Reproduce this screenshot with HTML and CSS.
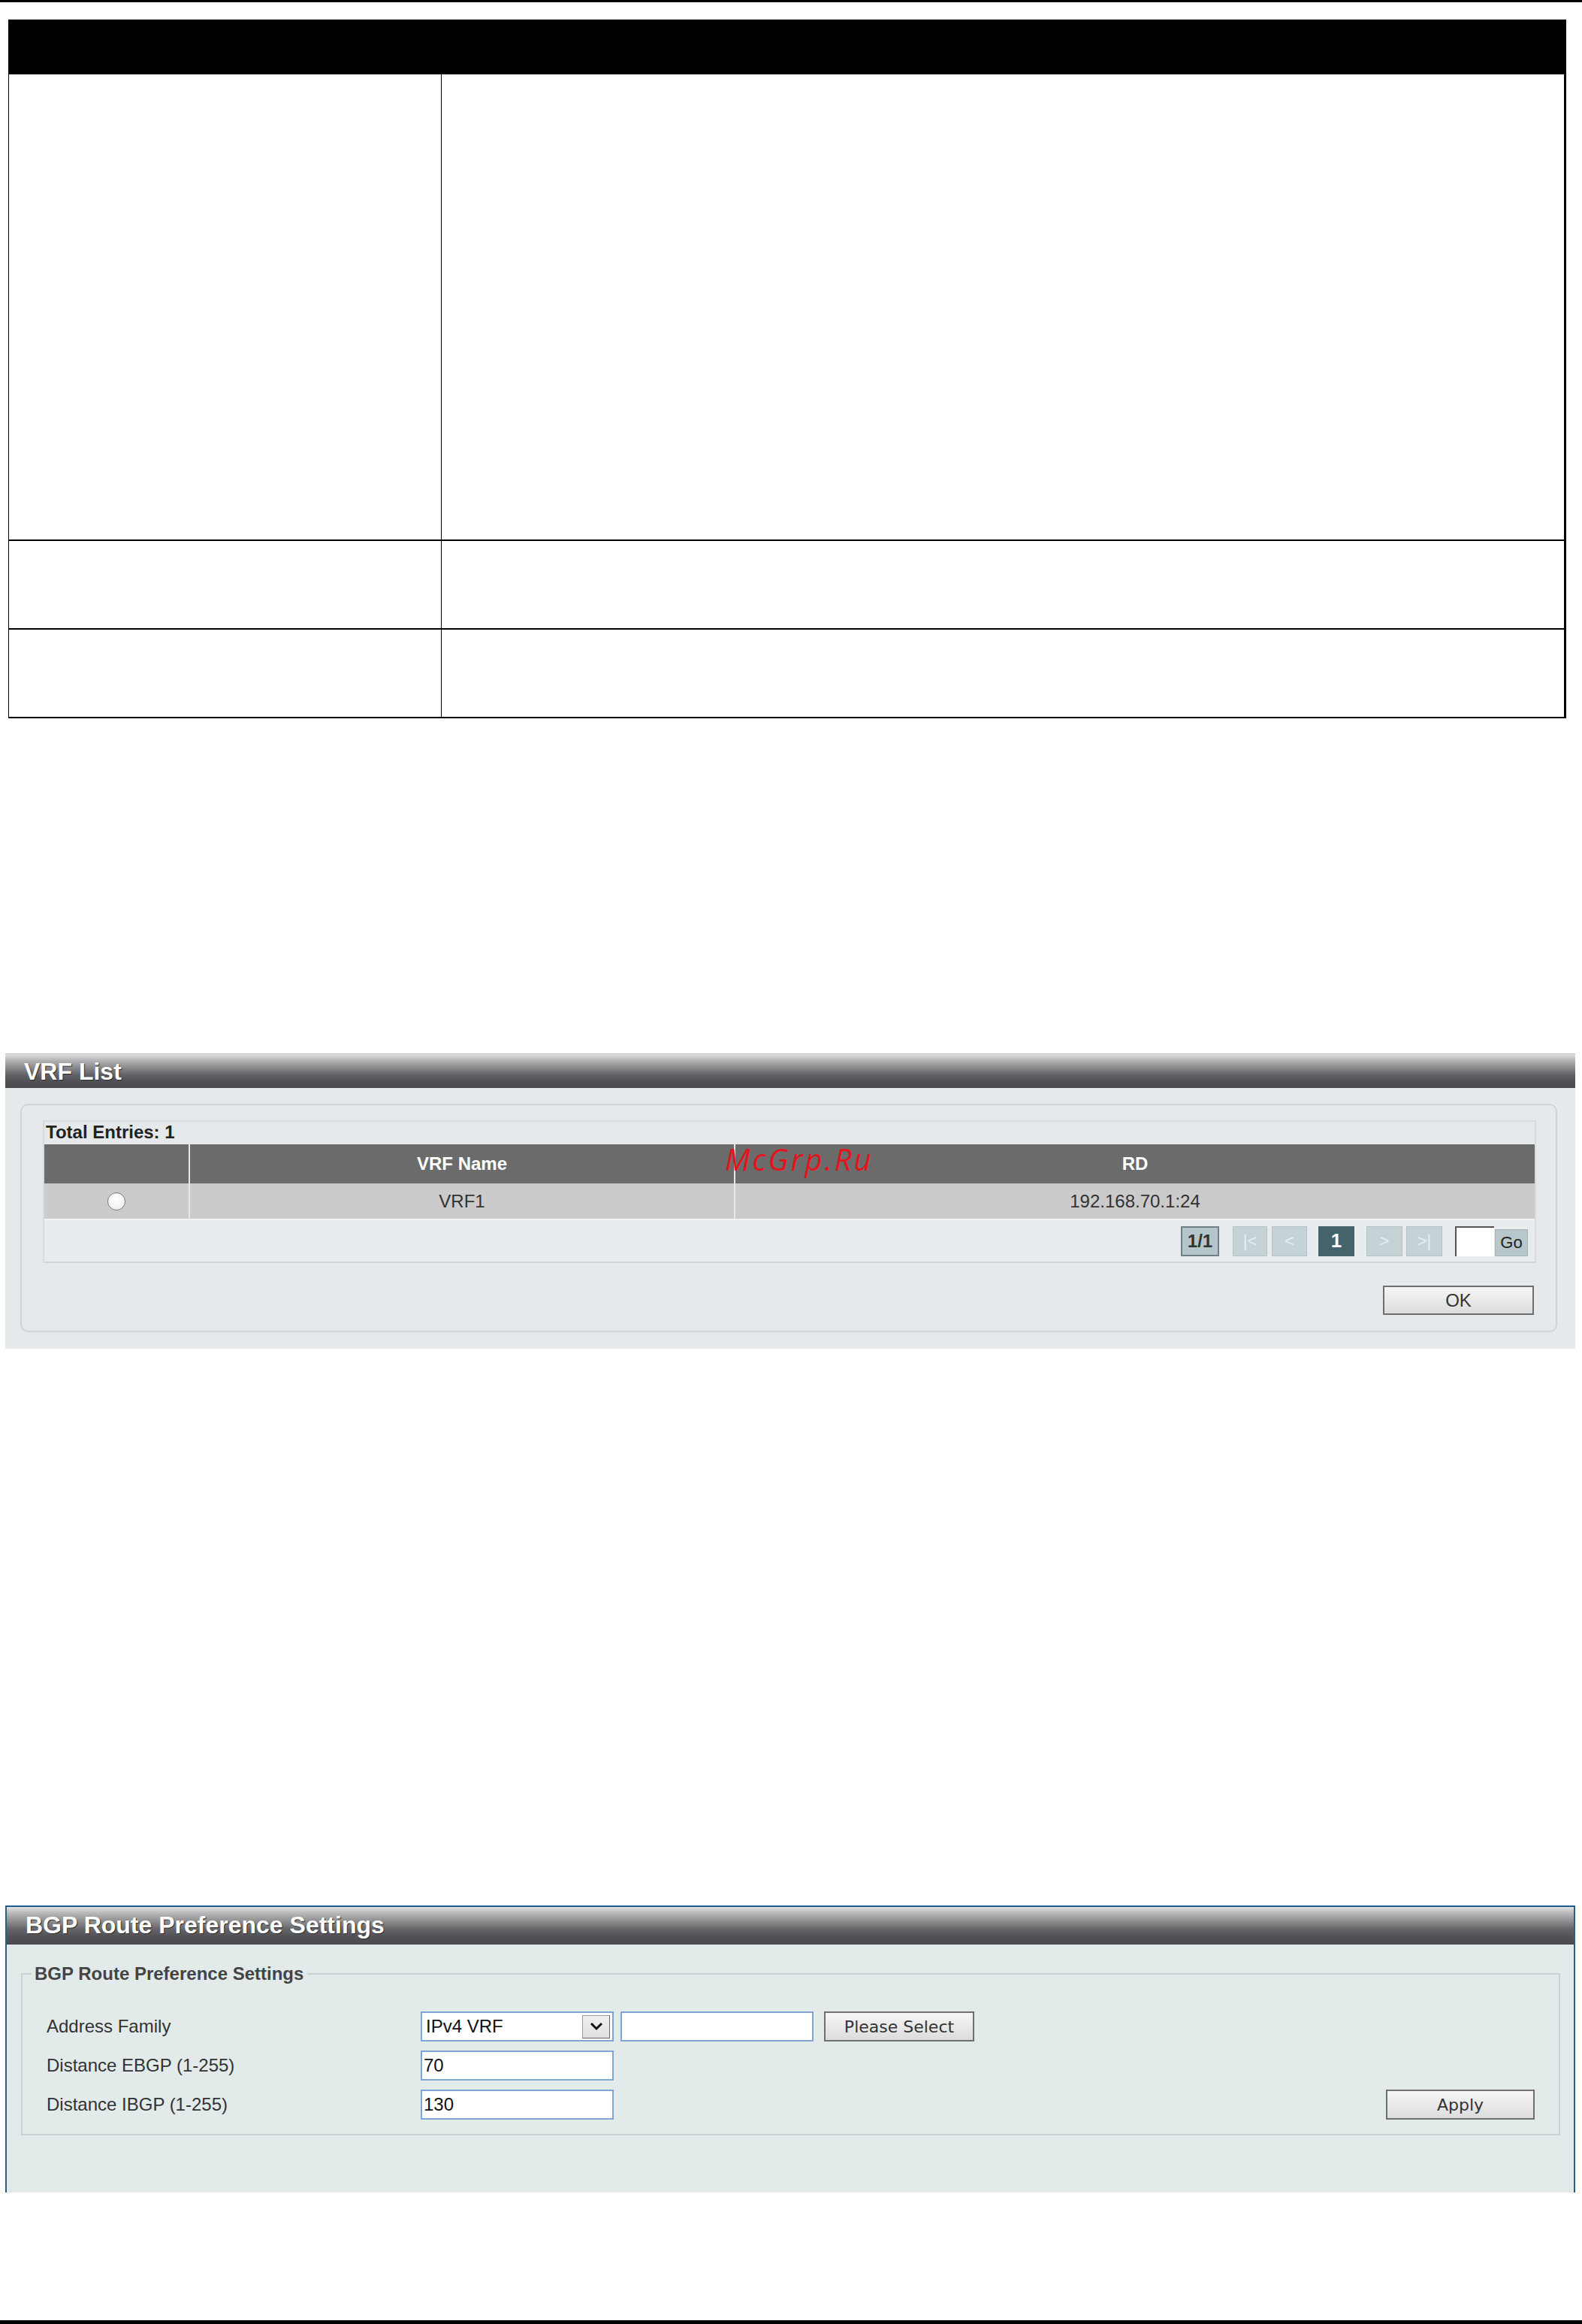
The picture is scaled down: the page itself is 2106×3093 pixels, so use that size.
FILE: index.html
```html
<!DOCTYPE html>
<html lang="en">
<head>
<meta charset="utf-8">
<title>VRF List / BGP Route Preference Settings</title>
<link rel="stylesheet" href="styles.css">
</head>
<body>
<div class="page">
  <div class="top-rule"></div>

  <div class="doc-table">
    <div class="doc-head"></div>
    <div class="doc-row row-tall"><div class="doc-cell"></div><div class="doc-cell"></div></div>
    <div class="doc-row row-short"><div class="doc-cell"></div><div class="doc-cell"></div></div>
    <div class="doc-row row-short"><div class="doc-cell"></div><div class="doc-cell"></div></div>
  </div>

  <section class="panel vrf-panel">
    <div class="panel-title">VRF List</div>
    <div class="panel-body vrf-body">
      <div class="list-box">
        <div class="entries">
          <div class="entries-caption">Total Entries: 1</div>
          <div class="grid-head">
            <div class="gcell"></div>
            <div class="gcell">VRF Name</div>
            <div class="gcell">RD</div>
          </div>
          <div class="grid-row">
            <div class="gcell"><span class="radio"></span></div>
            <div class="gcell">VRF1</div>
            <div class="gcell">192.168.70.1:24</div>
          </div>
          <div class="pager-row">
            <span class="pg pg-count">1/1</span>
            <span class="pg pg-dis pg-first">|&lt;</span>
            <span class="pg pg-dis pg-prev">&lt;</span>
            <span class="pg pg-cur">1</span>
            <span class="pg pg-dis pg-next">&gt;</span>
            <span class="pg pg-dis pg-last">&gt;|</span>
            <span class="pg-input"></span>
            <span class="pg-go">Go</span>
          </div>
        </div>
        <div class="ok-row"><span class="btn btn-ok">OK</span></div>
      </div>
    </div>
    <div class="watermark">McGrp.Ru</div>
  </section>

  <section class="panel bgp-panel">
    <div class="panel-title">BGP Route Preference Settings</div>
    <div class="panel-body bgp-body">
      <fieldset class="bgp-set">
        <legend>BGP Route Preference Settings</legend>
        <div class="form-row">
          <span class="label">Address Family</span>
          <span class="select"><span class="select-text">IPv4 VRF</span><span class="select-arrow"><svg width="20" height="14" viewBox="0 0 20 14"><path d="M3 3 L10 10 L17 3" fill="none" stroke="#111" stroke-width="3"/></svg></span></span>
          <span class="input input-vrf"></span>
          <span class="btn btn-select">Please Select</span>
        </div>
        <div class="form-row">
          <span class="label">Distance EBGP (1-255)</span>
          <span class="input input-num">70</span>
        </div>
        <div class="form-row">
          <span class="label">Distance IBGP (1-255)</span>
          <span class="input input-num">130</span>
          <span class="btn btn-apply">Apply</span>
        </div>
      </fieldset>
    </div>
  </section>

  <div class="bottom-rule"></div>
</div>
</body>
</html>
```
FILE: styles.css
```css
html, body {
  margin: 0;
  padding: 0;
  background: #ffffff;
}
body {
  font-family: "Liberation Sans", Arial, sans-serif;
  color: #333;
}
.page {
  width: 2106px;
  height: 3093px;
  position: relative;
  overflow: hidden;
}
.top-rule {
  height: 3px;
  background: #000;
}
.bottom-rule {
  height: 5px;
  background: #000;
  margin-top: 170px;
}

/* document table */
.doc-table {
  margin: 23px 0 0 11px;
  width: 2074px;
  box-sizing: border-box;
  border-left: 1px solid #000;
  border-right: 3px solid #000;
}
.doc-head {
  height: 73px;
  background: #000;
}
.doc-row {
  display: grid;
  grid-template-columns: 576px 1fr;
  border-bottom: 2px solid #000;
}
.row-tall { height: 619px; }
.row-short { height: 116px; }
.doc-cell:first-child {
  border-right: 1px solid #000;
}

/* panels */
.panel {
  margin-left: 7px;
  width: 2090px;
  position: relative;
}
.vrf-panel { margin-top: 446px; }
.bgp-panel {
  margin-top: 741px;
  border-top: 2px solid #1d5b8a;
  border-left: 2px solid #2a5f86;
  border-right: 2px solid #2a5f86;
  box-sizing: border-box;
}
.panel-title {
  height: 46px;
  line-height: 46px;
  padding-left: 25px;
  font-size: 32px;
  font-weight: bold;
  color: #fff;
  text-shadow: 1px 1px 1px #2a2a2a;
  background: linear-gradient(to bottom, #e2e2e2 0%, #b4b4b6 18%, #8a8a8d 40%, #616165 62%, #505054 82%, #4b4b4f 100%);
  border-top: 1px solid #bdbdbd;
  box-sizing: border-box;
}
.bgp-panel .panel-title {
  height: 50px;
  line-height: 48px;
  padding-left: 25px;
  border-top: 0;
}
.panel-body {
  box-sizing: border-box;
}
.vrf-body {
  background: #e5e9eb;
  height: 347px;
  padding: 21px 24px 22px 20px;
}
.list-box {
  height: 304px;
  box-sizing: border-box;
  border: 2px solid #cfd6d8;
  border-radius: 10px;
  padding: 20px 26px 0 28px;
}
.entries {
  border-left: 2px solid #d6dcde;
  border-right: 2px solid #d6dcde;
}
.entries-caption {
  height: 32px;
  line-height: 28px;
  font-size: 24px;
  font-weight: bold;
  color: #222;
  padding-left: 2px;
  border-top: 2px solid #d6dcde;
  box-sizing: border-box;
}
.grid-head, .grid-row {
  display: grid;
  grid-template-columns: 192px 726px 1fr;
  text-align: center;
}
.grid-head {
  height: 52px;
  line-height: 52px;
  background: #6b6b6b;
  color: #fff;
  font-size: 24px;
  font-weight: bold;
}
.grid-row {
  height: 47px;
  line-height: 47px;
  background: #cbcbcb;
  color: #333;
  font-size: 24px;
}
.gcell + .gcell {
  border-left: 2px solid #e6e6e6;
}
.grid-row .gcell:first-child {
  display: flex;
  align-items: center;
  justify-content: center;
}
.radio {
  width: 22px;
  height: 22px;
  border-radius: 50%;
  border: 1px solid #7a7a7a;
  background: radial-gradient(circle at 50% 40%, #ffffff 0%, #f4f4f4 60%, #e2e2e2 100%);
}
.pager-row {
  height: 59px;
  box-sizing: border-box;
  border-top: 2px solid #f2f4f5;
  border-bottom: 2px solid #cfd5d7;
  background: #e8ecee;
  display: flex;
  align-items: center;
  justify-content: flex-end;
  padding-right: 9px;
}
.pg {
  height: 40px;
  box-sizing: border-box;
  display: flex;
  align-items: center;
  justify-content: center;
  font-size: 22px;
  width: 48px;
}
.pg-count {
  width: 51px;
  background: #b5c6ca;
  border: 2px solid #6f8186;
  font-weight: bold;
  color: #2e3436;
  font-size: 24px;
}
.pg-dis {
  background: #c6d3d6;
  border: 1px solid #b4c3c6;
  color: #e8eef0;
}
.pg-first { margin-left: 18px; width: 46px; }
.pg-prev { margin-left: 6px; width: 47px; }
.pg-cur {
  margin-left: 15px;
  background: #45636a;
  color: #fff;
  font-weight: bold;
  font-size: 26px;
}
.pg-next { margin-left: 16px; }
.pg-last { margin-left: 5px; }
.pg-input {
  margin-left: 17px;
  width: 52px;
  height: 40px;
  box-sizing: border-box;
  background: #fff;
  border-top: 2px solid #555;
  border-left: 2px solid #555;
}
.pg-go {
  margin-left: 1px;
  width: 44px;
  height: 36px;
  margin-top: 4px;
  box-sizing: border-box;
  background: #b8c7ca;
  border: 1px solid #a3b3b7;
  display: flex;
  align-items: center;
  justify-content: center;
  font-size: 22px;
  color: #222;
}
.ok-row {
  display: flex;
  justify-content: flex-end;
  margin-top: 30px;
  padding-right: 3px;
}
.btn {
  height: 40px;
  box-sizing: border-box;
  border: 2px solid #6f6f6f;
  background: linear-gradient(to bottom, #f6f6f6 0%, #e9e9e9 50%, #dcdcdc 100%);
  display: flex;
  align-items: center;
  justify-content: center;
  color: #333;
}
.btn-ok {
  width: 201px;
  height: 39px;
  font-size: 24px;
}
.watermark {
  position: absolute;
  left: 958px;
  top: 119px;
  font-family: "Open Sans", "DejaVu Sans", sans-serif;
  font-style: italic;
  font-size: 40px;
  line-height: 44px;
  color: #e3141c;
  letter-spacing: 3px;
}

/* BGP panel */
.bgp-body {
  background: #e2eaea;
  height: 330px;
  padding: 25px 18px 0 19px;
}
.bgp-set {
  margin: 0;
  border: 2px solid #c8d1d3;
  padding: 36px 32px 19px 12px;
  min-width: 0;
}
.bgp-set legend {
  padding: 0 5px 0 4px;
  font-size: 24px;
  line-height: 28px;
  font-weight: bold;
  color: #444;
}
.form-row {
  display: flex;
  align-items: center;
  height: 40px;
  padding-left: 20px;
}
.form-row + .form-row {
  margin-top: 12px;
}
.label {
  width: 498px;
  font-size: 24px;
  color: #333;
}
.select {
  width: 257px;
  height: 40px;
  box-sizing: border-box;
  border: 2px solid #7fa6d0;
  background: #fff;
  display: flex;
  align-items: center;
  justify-content: space-between;
  padding: 0 3px 0 5px;
}
.select-text {
  font-size: 24px;
  color: #111;
}
.select-arrow {
  width: 37px;
  height: 31px;
  box-sizing: border-box;
  background: linear-gradient(to bottom, #f0f0f0, #e0e0e0);
  border: 1px solid #9a9a9a;
  border-right-color: #666;
  border-bottom-color: #666;
  display: flex;
  align-items: center;
  justify-content: center;
}
.input {
  height: 40px;
  box-sizing: border-box;
  border: 2px solid #7fa6d0;
  background: #fff;
  font-size: 24px;
  color: #111;
  display: flex;
  align-items: center;
  padding-left: 2px;
}
.input-vrf {
  width: 257px;
  margin-left: 9px;
}
.input-num {
  width: 257px;
}
.btn-select {
  width: 200px;
  margin-left: 14px;
  font-family: "DejaVu Sans", sans-serif;
  font-size: 22px;
  color: #333;
}
.btn-apply {
  width: 198px;
  margin-left: auto;
  font-family: "DejaVu Sans", sans-serif;
  font-size: 22px;
  color: #333;
}
```
